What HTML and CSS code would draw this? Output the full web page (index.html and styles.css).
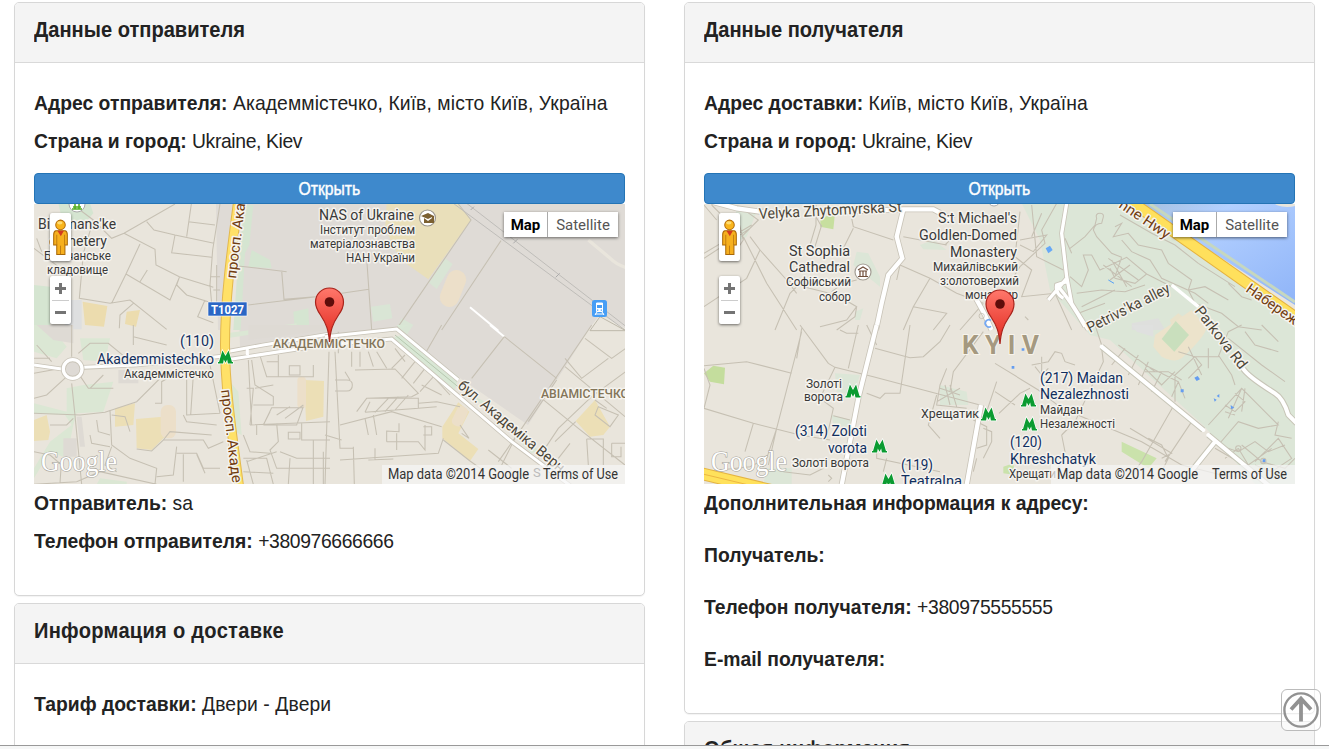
FILE: index.html
```html
<!DOCTYPE html>
<html lang="ru">
<head>
<meta charset="utf-8">
<title>Данные отправителя</title>
<link rel="stylesheet" href="styles.css">
</head>
<body>
<svg class="defs" width="0" height="0">
  <defs>
    <linearGradient id="pinFill" x1="0" y1="0" x2="0" y2="1"><stop offset="0" stop-color="#ff776b"/><stop offset="1" stop-color="#e0271c"/></linearGradient>
    <linearGradient id="water" x1="0" y1="0" x2="1" y2="1"><stop offset="0" stop-color="#a5bfdd"/><stop offset=".3" stop-color="#b3d0ff"/><stop offset="1" stop-color="#8fb4f8"/></linearGradient>
    <symbol id="pin" viewBox="0 0 30 56" overflow="visible">
      <path d="M15 55C14 43 12 37 6 28C2.500 23 1 20 1 15A14 14 0 0 1 29 15C29 20 27 24 24 28C18 37 16 43 15 55Z" fill="url(#pinFill)" stroke="#a8231b" stroke-width="1.200"/>
      <circle cx="15" cy="15" r="4.800" fill="#5e0d0a"/>
    </symbol>
    <symbol id="metro" viewBox="0 0 44 40" overflow="visible">
      <path d="M0 39H15L17 27L22 37L27 27L29 39H44V35H41L31 1L22 17L13 1L3 35H0Z" fill="#0b9b31" stroke="#fff" stroke-width="4" paint-order="stroke"/>
    </symbol>
    <symbol id="pegman" viewBox="0 0 44 108">
      <path d="M8 34H36Q42 36 42 46V76H35V104H11V76H2V46Q2 36 8 34Z" fill="#f6b01f" stroke="#a96808" stroke-width="3"/>
      <path d="M11 46V76M34 46V76M22 78V103" stroke="#b87510" stroke-width="2.500"/>
      <path d="M13 34H32L23 50Z" fill="#d23b20"/>
      <circle cx="22" cy="17" r="14" fill="#f9b51c" stroke="#b36c0b" stroke-width="3"/>
      <ellipse cx="20" cy="11" rx="8" ry="5" fill="#ffdc71"/>
    </symbol>
  </defs>
</svg>
<main class="page">
  <div class="column">
    <section class="panel">
      <h2 class="panel-head"><span class="fit">Данные отправителя</span></h2>
      <div class="panel-body">
        <p class="row"><span class="fit"><b>Адрес отправителя:</b> <span class="loose">Академмістечко, Київ, місто Київ, Україна</span></span></p>
        <p class="row"><span class="fit"><b>Страна и город:</b> <span class="tight">Ukraine, Kiev</span></span></p>
        <button class="open"><span>Открыть</span></button>
        <div class="map">
          <svg class="canvas" viewBox="34 204 591 280">
            <path d="M34 204H625V484H34Z" fill="#e9e5dc"/>
            <path d="M247 204H625V328L600 314L592 325L528 425L460 378L398 330L240 347L238 280ZM216 204H236L229 330H218Z" fill="#dfdbd6"/>
            <g transform="translate(30 170) scale(.33333)">
              <path d="M85 100H180L190 130L160 165H100ZM645 105H670L658 225L645 250L632 480H610L625 260ZM665 240L720 270L725 295L655 290ZM790 425L835 415L838 480H795ZM12 345L60 350V480H12Z" fill="#d5e5d1"/>
              <path d="M158 395L232 408L222 470L165 465ZM290 425L330 420L318 470L285 462Z" fill="#ecdcae"/>
              <path d="M100 390H155V478H105Z" fill="#dedfe0"/>
              <path d="M130 105L190 150L245 205L282 190L435 102M282 190L375 238L378 285L448 320L550 352M484 102L470 200M350 155L372 180L435 195L552 220M435 195L425 248L545 262M475 155L555 165M330 222L288 312L245 400M288 312L420 390L448 322L440 345L470 375L535 395M352 300L330 335M570 102L548 240L540 345L545 400M190 150L160 250L148 385L240 400L300 390L410 478M525 390L503 440L550 458M310 400L270 435L268 475M625 288L770 305M755 302L762 388L855 380M655 405L860 380M12 235L85 290M20 205L35 245M560 285V395M540 320H570M550 360H570" class="street"/>
            </g>
            <g transform="translate(325 170) scale(.33333)">
              <path d="M185 102H400L438 150L310 328L225 268L180 175Z" fill="#e9dfba"/>
              <path d="M360 265L383 282L335 357L312 338ZM138 410L195 402L202 445L145 455ZM230 445L265 465L245 495L215 475Z" fill="#d9e5d5"/>
              <rect x="355" y="298" width="58" height="115" rx="29" transform="rotate(22 384 355)" fill="#ecdfc9"/>
              <path d="M400 102L438 150L218 472M528 212L350 480M125 265L140 480M50 370L132 358" class="street"/>
              <path d="M385 100L900 480M425 100L900 467" fill="none" stroke="#bfbdb9" stroke-width="3"/>
              <path d="M437 120L447 110M565 220L577 208M692 322L704 310" stroke="#aaa" stroke-width="3"/>
              <path d="M790 210L850 260Q875 285 902 292" fill="none" stroke="#e9e5dc" stroke-width="10"/>
              <path d="M435 412L520 482" stroke="#fff" stroke-width="6"/>
              <path d="M795 482L825 440L902 482Z" fill="#e9e5dc" stroke="#bdb8aa" stroke-width="3"/>
            </g>
            <g transform="translate(30 325) scale(.33333)">
              <path d="M12 0H60L110 65L80 100L12 80ZM150 40H240L225 110L160 105ZM160 180L250 170L220 260L140 265L130 300L110 400L60 380L12 460V430L60 350L125 300L105 270L12 265V235L110 260V190ZM600 170L625 200L635 330L615 320ZM590 25L800 -5V8L590 40ZM210 460L290 470V478H200Z" fill="#dbe7d4"/>
              <path d="M20 0H130V55L70 45ZM655 0H895V15L655 45ZM265 135H325V175H265ZM100 340H140V395H100ZM140 275H155L165 365H150Z" fill="#dedad4"/>
              <path d="M255 250L315 235L310 300L255 305ZM318 282L400 275L410 330L365 375L320 370ZM823 165L882 168L880 275L828 288ZM12 285L50 270L60 320L55 345L12 348Z" fill="#ecdfb6"/>
              <rect x="392" y="240" width="46" height="100" rx="20" fill="#ecdfc9"/><rect x="802" y="155" width="26" height="95" rx="12" fill="#ecdfc9"/>
              <path d="M125 95V0M110 155L50 210L12 220M125 175L135 272L155 478M12 265L150 270L225 262L320 230L400 150L460 135M12 145L95 130M145 145L175 190H250M180 190L220 150M310 0V60M310 35L410 60M470 140V270L570 265M490 150L482 270M540 120L570 265M460 270L470 290L560 300M375 235H395V170L430 150M240 255L245 360L300 400L380 430L375 478M245 270L285 275L300 320M200 285L205 320L240 330M180 330L185 355L240 365M245 365L225 420L260 440M320 372L365 378L400 345H520L535 370L580 350M400 345L420 320L545 330M440 365L430 450L380 455M440 385H500L520 430H570M460 388V470M500 388L525 445M12 380L60 390L95 420M95 400L90 475M12 478L140 470L210 440L380 478M20 60L65 110M12 100H60M145 85L180 55H235L290 100M60 300H110L130 280" class="street"/>
              <path d="M655 105L665 300M650 190H670L660 300M665 105L675 180L730 215V240H670M675 190L730 180M690 92L710 155H850V120M745 90V155M710 110H745M778 122H810V150H778ZM700 300L725 248H820M720 260L700 300M740 270L780 245M765 280L820 240M700 300H800L820 245M660 300L900 290M740 295L745 350L720 375L740 430H900M750 380L800 400H900M775 322H810V342H775ZM815 295V345H900M640 330L660 380L720 385M640 400H710L730 478M640 440L730 445M780 400L775 478M650 405L670 478M850 345V480M880 380V478M740 380L650 410M680 300V330" class="street"/>
              <path d="M12 120L95 132M160 127L320 120L575 94M590 80L700 60L895 28M592 104L895 58" fill="none" stroke="#c8c3b7" stroke-width="14"/>
              <path d="M12 120L95 132M160 127L320 120L575 94M590 80L700 60L895 28M592 104L895 58M652 70V90" fill="none" stroke="#fff" stroke-width="9"/>
              <circle cx="128" cy="132" r="28" fill="#dedad5" stroke="#c8c3b7" stroke-width="15"/><circle cx="128" cy="132" r="28" fill="none" stroke="#fff" stroke-width="10"/>
            </g>
            <g transform="translate(325 325) scale(.33333)">
              <path d="M230 30L400 155L390 195L200 40ZM215 0H250L225 15ZM440 210L480 230L520 280L640 375L620 385Z" fill="#d9e7d5"/>
              <path d="M400 232L433 260L400 325L460 372L435 408L352 340V305ZM810 225L855 305L835 330L795 335L752 288Z" fill="#ecdfb6"/>
              <rect x="388" y="243" width="34" height="62" rx="14" transform="rotate(26 405 273)" fill="#ecdfc9"/>
              <path d="M495 0L538 35" stroke="#fff" stroke-width="6"/>
              <path d="M538 35L695 160M538 35L440 160M350 0L305 78M800 0L590 310L520 410M780 40L860 100L902 70M720 125L900 275M695 165L610 290M902 140L800 215L700 310L640 400M650 220L760 310L900 420M720 100L770 160L850 100M752 290L690 350M810 225L845 250M820 245L880 270L855 305L810 270ZM785 342H835V420M785 342L790 420M860 355H902M860 355V395H888V365M735 355L700 400M570 340L530 420M490 375L560 430M405 300L432 340L410 325M355 345L435 408L480 440" class="street"/>
              <path d="M80 80V125M105 80V125M130 80L145 125M155 80L185 130M210 70L240 110M240 90L200 130M270 110L230 160M300 130L265 175M330 150L285 200M90 135L210 132L280 205L260 215L125 220L95 260M125 220H280V250L120 262M120 262L135 230M150 262L190 220M180 260L220 215M210 255L250 210M280 235L335 230M280 250L335 245M335 230L405 245M30 165H65Q82 165 82 180Q82 198 65 198H30M60 140L75 165M12 80L0 480M30 80L45 370H85M0 330L50 345M45 405L340 385L355 340M85 365L88 478M45 300L200 260L350 305M120 280L130 330M145 270L155 330M185 350V318L222 320V295M215 325V350H280L300 375L300 300M295 305H320V330H295M185 350H215M215 345V375M130 405L205 402M150 405V370M290 180L350 210M320 150L375 210M40 20V85" class="street"/>
              <path d="M0 35L215 12L400 165M0 60L200 42L560 350L760 500" fill="none" stroke="#c8c3b7" stroke-width="14"/>
              <path d="M0 35L215 12L400 165M0 60L200 42L560 350L760 500" fill="none" stroke="#fff" stroke-width="9"/>
              <path d="M210 30L405 190" stroke="#b6c8af" stroke-width="3"/>
            </g>
            <path d="M238 202C231 255 225 300 225 345C225 390 233 440 239 486" fill="none" stroke="#e3b84d" stroke-width="10"/>
            <path d="M238 202C231 255 225 300 225 345C225 390 233 440 239 486" fill="none" stroke="#ffe168" stroke-width="8"/>
            <circle cx="77" cy="204" r="8" fill="#fff" stroke="#aaa"/><path d="M73 203H81M73 207H81M75 202V209M79 202V209M72 209H82" stroke="#51ad20" stroke-width="1.500"/>
            <g class="label big"><text x="38" y="229" textLength="78" lengthAdjust="spacingAndGlyphs">Bikhmans'ke</text><text x="49" y="246" textLength="58" lengthAdjust="spacingAndGlyphs">cemetery</text>
              <text x="319" y="220" textLength="95" lengthAdjust="spacingAndGlyphs">NAS of Ukraine</text></g>
            <g class="label small"><text x="44" y="260" textLength="67" lengthAdjust="spacingAndGlyphs">Більчанське</text><text x="47" y="274" textLength="61" lengthAdjust="spacingAndGlyphs">кладовище</text>
              <text x="320" y="234" textLength="95" lengthAdjust="spacingAndGlyphs">Інститут проблем</text><text x="310" y="248" textLength="105" lengthAdjust="spacingAndGlyphs">матеріалознавства</text><text x="346" y="262" textLength="69" lengthAdjust="spacingAndGlyphs">НАН України</text><text x="124" y="378" textLength="90" lengthAdjust="spacingAndGlyphs">Академмістечко</text></g>
            <g class="label metro"><text x="180" y="346" textLength="34" lengthAdjust="spacingAndGlyphs">(110)</text><text x="97" y="364" textLength="117" lengthAdjust="spacingAndGlyphs">Akademmistechko</text></g>
            <g class="label district"><text x="273" y="348" textLength="112" lengthAdjust="spacingAndGlyphs">АКАДЕММІСТЕЧКО</text><text x="541" y="398" textLength="88" lengthAdjust="spacingAndGlyphs">АВІАМІСТЕЧКО</text></g>
            <g class="label highway"><text transform="translate(236 279) rotate(-83)" textLength="76" lengthAdjust="spacingAndGlyphs">просп. Ака</text><text transform="translate(221 390) rotate(83)" textLength="94" lengthAdjust="spacingAndGlyphs">просп. Акаде</text></g>
            <g class="label roadname"><text transform="translate(457 387) rotate(40)" textLength="134" lengthAdjust="spacingAndGlyphs">бул. Академіка Верн</text></g>
            <path d="M208 302H247V316H208Z" fill="#2a66c5" stroke="#fff" stroke-width=".6"/><text x="211" y="314" class="shield" textLength="33" lengthAdjust="spacingAndGlyphs">T1027</text>
            <circle cx="427.500" cy="218" r="8" fill="#fff" stroke="#9b968c" stroke-width="1.200"/><path d="M421 216L428 213L434 216L428 219ZM424 218L428 221L432 218V223H424ZM432 216H434V223H432Z" fill="#7c6132"/>
            <rect x="592" y="300" width="15" height="17" rx="2.500" fill="#479ef5"/><path d="M596.500 303H602.500V311.500H596.500ZM595 314H604M597 312L595 315M602 312L604 315" fill="#fff" stroke="#fff"/><path d="M597 305H602V308H597ZM597 309.500H598.300V310.800H597ZM600.700 309.500H602V310.800H600.700Z" fill="#479ef5"/>
            <use href="#metro" x="218" y="350" width="15" height="14"/>
            <use href="#pin" x="314.500" y="287" width="30" height="56"/>
            <text class="google" x="41" y="471" textLength="76" lengthAdjust="spacingAndGlyphs">Google</text>
            <path d="M382 465H625V484H382Z" fill="#f5f5f5" fill-opacity=".72"/>
            <text x="533" y="477" class="faded">S</text>
            <g class="credit"><text x="388" y="479" textLength="141" lengthAdjust="spacingAndGlyphs">Map data ©2014 Google</text><text x="543" y="479" textLength="75" lengthAdjust="spacingAndGlyphs">Terms of Use</text></g>
          </svg>
          <div class="tools"><div class="peg"><svg viewBox="0 0 44 108"><use href="#pegman"/></svg></div><div class="zoom"><i class="plus"></i><hr><i class="minus"></i></div></div>
          <div class="types"><b>Map</b><span>Satellite</span></div>
        </div>
        <p class="row"><span class="fit"><b>Отправитель:</b> sa</span></p>
        <p class="row"><span class="fit"><b>Телефон отправителя:</b> <span class="tight">+380976666666</span></span></p>
      </div>
    </section>
    <section class="panel">
      <h2 class="panel-head"><span class="fit wide">Информация о доставке</span></h2>
      <div class="panel-body"><p class="row"><span class="fit"><b>Тариф доставки:</b> <span class="loose">Двери - Двери</span></span></p></div>
    </section>
  </div>
  <div class="column">
    <section class="panel">
      <h2 class="panel-head"><span class="fit">Данные получателя</span></h2>
      <div class="panel-body spaced">
        <p class="row"><span class="fit"><b>Адрес доставки:</b> <span class="loose">Київ, місто Київ, Україна</span></span></p>
        <p class="row"><span class="fit"><b>Страна и город:</b> <span class="tight">Ukraine, Kiev</span></span></p>
        <button class="open"><span>Открыть</span></button>
        <div class="map recipient">
          <svg class="canvas" viewBox="704 204 591 280">
            <path d="M704 204H1295V484H704Z" fill="#e9e5dc"/>
            <path d="M1022 204H1135L1295 320V484H1255L1204 426L1110 340L1090 335L1050 290L1040 240Z" fill="#dce6d7"/>
            <path d="M1137 204H1295V305Z" fill="url(#water)"/>
            <path d="M1274 202A13 5 0 0 0 1300 202Z" fill="#e9e5dc"/>
            <path d="M1150 204L1295 302" stroke="#c6d7bf" stroke-width="3"/>
            <g transform="translate(700 170) scale(.33333)">
              <path d="M362 145L405 130L400 178L360 170Z" fill="#c7df9f"/>
              <path d="M470 245L505 250L540 320V350L460 285ZM465 425L490 415L480 450H465ZM660 225L700 210L740 240L670 238ZM110 105L170 125L140 200L100 220Z" fill="#dce6d7"/>
              <path d="M12 105L50 150M35 105L75 145M12 250L155 165M12 265L150 175M115 150L130 210L110 240M140 125L175 150L125 200M365 165L345 230M348 105V165L330 225M345 135L365 170M455 145L460 170L580 210M460 175L430 235L415 260M150 200L180 240L140 325L12 410M130 200L200 340L290 480M180 240L260 330L290 370M300 340L270 370L225 480M260 330L310 350L410 375L470 410L440 450L360 470M470 410L465 440L410 480M395 365L430 340L470 330M600 285L690 325L770 370L850 400M690 325L640 410L610 480M610 200L740 225M735 225L760 200M600 285L590 330M640 410L740 430L700 480M850 400L780 480" class="street"/>
              <path d="M35 95L110 115L180 125L300 130M430 125L610 118H700L760 150M610 118L590 200L607 265L565 315L545 400L528 480M825 380L855 435L875 480" fill="none" stroke="#c9c4b8" stroke-width="18"/>
              <path d="M35 95L110 115L180 125L300 130M430 125L610 118H700L760 150M610 118L590 200L607 265L565 315L545 400L528 480M825 380L855 435L875 480" fill="none" stroke="#fff" stroke-width="13"/>
              <circle cx="845" cy="438" r="8" fill="none" stroke="#bbb5a7" stroke-width="2"/><path d="M873 451A11 11 0 1 0 873 469" fill="none" stroke="#74a8f3" stroke-width="5"/>
            </g>
            <g transform="translate(995 170) scale(.33333)">
              <path d="M75 125L60 260L110 300L80 380L180 370L230 480M110 105L125 260L205 300M75 210L155 195L115 245L75 225M140 130L110 200M185 100L140 180L150 220L75 290L40 345M225 235L270 200L300 165L305 145Q300 130 315 130Q330 130 323 148L320 160Q300 160 295 180L305 200L350 250L380 262M225 320L260 350L280 300L265 255L290 255L315 300L395 262L455 312L420 340L360 325L345 295M340 265L430 330M325 285L410 350M350 270L395 350M380 262L360 320M405 285L345 330M455 312L530 350M360 170L380 160L355 200L400 190L430 225L500 240L520 280L590 330L580 360L630 350L700 390M375 135L470 190L540 225L610 280L720 350M380 210L410 245L465 270L500 325L600 370L640 400M245 370L320 360L390 365L450 345M260 410L360 360M250 430L330 400M230 250L210 205M580 360L600 400L680 430L730 470L800 480M700 340L740 380L770 390M90 440L100 450" class="street"/>
              <path d="M152 235L165 227L173 240L160 250Z" fill="#66a8f7"/><path d="M340 330L357 340" stroke="#55a0f5" stroke-width="3"/>
              <path d="M535 480L525 450L550 430L590 460L600 480Z" fill="#e9e2ca"/><path d="M410 460L490 445L510 480H410Z" fill="#dedfdd"/>
              <path d="M215 100L200 190L215 320L230 400L280 480M160 390L215 325M190 350Q225 390 270 470M215 335L185 345Q180 370 205 385" fill="none" stroke="#c9c4b8" stroke-width="15"/>
              <path d="M215 100L200 190L215 320L230 400L280 480M160 390L215 325M190 350Q225 390 270 470M215 335L185 345Q180 370 205 385M530 345L610 410" fill="none" stroke="#fff" stroke-width="10"/>
              <path d="M380 75L920 455" stroke="#e5b23e" stroke-width="35"/><path d="M380 75L920 455" stroke="#ffe05c" stroke-width="29"/>
            </g>
            <g transform="translate(700 325) scale(.33333)">
              <path d="M12 145L40 122L75 128L72 178L30 170Z" fill="#c4dd9d"/>
              <path d="M405 145L480 150L460 210L410 200ZM720 180L800 200L805 240L720 240ZM395 270L455 285V310L400 300ZM200 430H275V478H190Z" fill="#dce6d7"/>
              <path d="M12 122L140 110L275 145M300 0L385 115L405 127L520 155L840 240M475 0L445 130M420 15L440 25H475M525 70L630 98L670 95L720 50L750 0M630 0L600 205H555L540 220L500 205M305 20L230 310L200 400M305 10L290 100M12 130L30 180L12 250M12 250L160 295L300 330L390 345M160 295L135 380M230 310L205 420M405 127L360 220L400 250L380 340M400 272L450 285M530 350V400L720 440M710 210L685 300L720 340M740 130L720 180L710 240L800 250M720 190L780 210M735 180L750 240M750 180L770 245M710 230L780 190M820 285L860 305V360L830 370M850 310L875 320V350L850 400M830 400L820 440M560 400L550 440M385 450L395 460L385 470M750 200L760 140L850 20M890 170L860 260L870 270M530 60L500 0M250 440L330 450L370 430M12 440L150 425L200 400" class="street"/>
              <path d="M530 0L475 220L425 480M843 240L800 480" fill="none" stroke="#c9c4b8" stroke-width="18"/><path d="M530 0L475 220L425 480M843 240L800 480" fill="none" stroke="#fff" stroke-width="13"/>
              <path d="M0 368L230 430" stroke="none"/>
              <path d="M-10 370L210 490" stroke="none"/>
              <path d="M0 378L0 480H170L150 470L12 430Z" fill="none"/>
              <path d="M0 445L230 500" stroke="#e4b443" stroke-width="38"/><path d="M0 445L230 500" stroke="#ffe15b" stroke-width="32"/><path d="M0 445L230 500" stroke="#ecb641" stroke-width="3"/>
            </g>
            <g transform="translate(995 325) scale(.33333)">
              <path d="M380 350L485 400L460 430L420 405L380 380ZM25 425L55 415L60 450L25 445Z" fill="#cae2ab"/>
              <path d="M480 30L590 -45L635 5Q635 30 560 100Q540 115 500 95L475 65Z" fill="#ece3cb"/><path d="M542 -12L582 30L538 80L500 42Z" fill="#c9dfbd"/><path d="M410 0H475V35L425 20Z" fill="#dfe0df"/>
              <path d="M0 115L130 195L200 250L440 350L560 420L700 455M12 265L75 205L105 190M0 200L60 240M320 60L300 0M320 70L325 110L240 290L200 330M200 330L210 380L180 450M540 235L440 410L410 450M460 340L500 360L520 400L490 460M590 290L510 410M405 310L530 385L500 400M110 120L160 110L180 80L200 85L210 110L240 120M120 125L140 150L160 130M140 95V150M370 60L480 140M390 70L350 120M430 90L400 150M460 110L430 180M500 140L470 200M540 140L500 180L450 130M550 80L600 95H670L700 20L740 0M600 95L540 150L540 230M600 95L620 120L580 160M640 70V130M670 90L710 150L720 180M580 65L620 150M450 120L550 170L530 215M450 140L520 140L560 165M640 300L740 190L800 250L850 300L790 310L730 290L670 360M740 190L700 280M720 205L750 230L720 260L690 240M750 190L740 260M690 260L720 270M670 360L730 380L780 350L820 380L870 360M730 370L760 420L830 370M780 410L850 340L890 400L830 440L780 420M800 410L740 360M800 410L870 430L900 400M660 370L730 410M690 400L730 370M850 290L840 330L890 340M700 40L800 120L870 170M750 20L780 60L850 80M800 0L850 50M550 170L570 220" class="street"/>
              <circle cx="730" cy="370" r="8" class="street"/><circle cx="805" cy="408" r="8" class="street"/>
              <path d="M598 158L608 153L615 163L605 168ZM665 213L673 207V218ZM707 240L718 248L708 253ZM656 220L665 224L659 230ZM557 193H566V202H557ZM803 403H811V411H803ZM50 123H58V131H50ZM80 70H88V77H80Z" fill="#659df0"/>
              <path d="M320 65L625 315M640 330L820 480M745 132Q760 155 840 205Q865 220 880 270L905 295M660 350L580 450" fill="none" stroke="#c7c5b7" stroke-width="18"/>
              <path d="M320 65L625 315M640 330L820 480M745 132Q760 155 840 205Q865 220 880 270L905 295M660 350L580 450" fill="none" stroke="#fff" stroke-width="12" stroke-linecap="round"/>
            </g>
            <circle cx="994" cy="200" r="6" fill="#fff" stroke="#aaa"/>
            <g class="label roadname"><text transform="translate(759 219) rotate(-3)" textLength="143" lengthAdjust="spacingAndGlyphs">Velyka Zhytomyrska St</text><text transform="translate(1090 333) rotate(-27)" textLength="91" lengthAdjust="spacingAndGlyphs">Petrivs'ka alley</text><text transform="translate(1194 311) rotate(52)" textLength="75" lengthAdjust="spacingAndGlyphs">Parkova Rd</text></g>
            <g class="label highway"><text transform="translate(1118 207) rotate(34)" textLength="58" lengthAdjust="spacingAndGlyphs">nne Hwy</text><text transform="translate(1245 291) rotate(35)" textLength="68" lengthAdjust="spacingAndGlyphs">Набережн</text></g>
            <g class="label big"><text x="789" y="256" textLength="61" lengthAdjust="spacingAndGlyphs">St Sophia</text><text x="789" y="272" textLength="61" lengthAdjust="spacingAndGlyphs">Cathedral</text><text x="938" y="223" textLength="79" lengthAdjust="spacingAndGlyphs">S:t Michael's</text><text x="919" y="240" textLength="98" lengthAdjust="spacingAndGlyphs">Goldlen-Domed</text><text x="950" y="257" textLength="67" lengthAdjust="spacingAndGlyphs">Monastery</text></g>
            <g class="label small"><text x="786" y="286" textLength="65" lengthAdjust="spacingAndGlyphs">Софійський</text><text x="819" y="301" textLength="32" lengthAdjust="spacingAndGlyphs">собор</text><text x="933" y="271" textLength="85" lengthAdjust="spacingAndGlyphs">Михайлівський</text><text x="940" y="285" textLength="79" lengthAdjust="spacingAndGlyphs">з:олотоверхий</text><text x="965" y="299" textLength="53" lengthAdjust="spacingAndGlyphs">монастир</text><text x="806" y="388" textLength="36" lengthAdjust="spacingAndGlyphs">Золоті</text><text x="804" y="401" textLength="39" lengthAdjust="spacingAndGlyphs">ворота</text><text x="921" y="418" textLength="58" lengthAdjust="spacingAndGlyphs">Хрещатик</text><text x="792" y="467" textLength="77" lengthAdjust="spacingAndGlyphs">Золоті ворота</text><text x="1040" y="414" textLength="43" lengthAdjust="spacingAndGlyphs">Майдан</text><text x="1040" y="428" textLength="75" lengthAdjust="spacingAndGlyphs">Незалежності</text><text x="1009" y="478" textLength="47" lengthAdjust="spacingAndGlyphs">Хрещати</text></g>
            <g class="label metro"><text x="795" y="436" textLength="72" lengthAdjust="spacingAndGlyphs">(314) Zoloti</text><text x="828" y="453" textLength="39" lengthAdjust="spacingAndGlyphs">vorota</text><text x="901" y="470" textLength="32" lengthAdjust="spacingAndGlyphs">(119)</text><text x="901" y="486" textLength="61" lengthAdjust="spacingAndGlyphs">Teatralna</text><text x="1040" y="383" textLength="83" lengthAdjust="spacingAndGlyphs">(217) Maidan</text><text x="1040" y="399" textLength="89" lengthAdjust="spacingAndGlyphs">Nezalezhnosti</text><text x="1010" y="447" textLength="32" lengthAdjust="spacingAndGlyphs">(120)</text><text x="1010" y="464" textLength="86" lengthAdjust="spacingAndGlyphs">Khreshchatyk</text></g>
            <text class="city" x="962" y="354" textLength="77">KYIV</text>
            <circle cx="863" cy="272" r="8" fill="#fff" stroke="#a39d94" stroke-width="1.200"/><path d="M858 270L863 267L868 270M859 271H867M860 271V276M863 271V276M866 271V276M858 276.500H868" fill="none" stroke="#704f3c" stroke-width="1.200"/>
            <use href="#metro" x="845.500" y="384" width="15" height="14"/><use href="#metro" x="981" y="407" width="15" height="14"/><use href="#metro" x="872" y="439" width="15" height="14"/><use href="#metro" x="881" y="473" width="15" height="14"/><use href="#metro" x="1021" y="393" width="15" height="14"/><use href="#metro" x="1022" y="417" width="15" height="14"/>
            <use href="#pin" x="985" y="289" width="30" height="56"/>
            <text class="google" x="711" y="471" textLength="76" lengthAdjust="spacingAndGlyphs">Google</text>
            <path d="M1051 465H1295V484H1051Z" fill="#f5f5f5" fill-opacity=".72"/>
            <g class="credit"><text x="1057" y="479" textLength="141" lengthAdjust="spacingAndGlyphs">Map data ©2014 Google</text><text x="1212" y="479" textLength="75" lengthAdjust="spacingAndGlyphs">Terms of Use</text></g>
          </svg>
          <div class="tools"><div class="peg"><svg viewBox="0 0 44 108"><use href="#pegman"/></svg></div><div class="zoom"><i class="plus"></i><hr><i class="minus"></i></div></div>
          <div class="types"><b>Map</b><span>Satellite</span></div>
        </div>
        <p class="row"><span class="fit"><b>Дополнительная информация к адресу:</b></span></p>
        <p class="row"><span class="fit"><b>Получатель:</b></span></p>
        <p class="row"><span class="fit"><b>Телефон получателя:</b> <span class="tight">+380975555555</span></span></p>
        <p class="row"><span class="fit"><b>E-mail получателя:</b></span></p>
      </div>
    </section>
    <section class="panel">
      <h2 class="panel-head"><span class="fit wide">Общая информация</span></h2>
      <div class="panel-body"></div>
    </section>
  </div>
</main>
<footer class="bottom"></footer>
<a class="to-top"><svg viewBox="0 0 40 42"><circle cx="20" cy="21" r="17.500" fill="none" stroke="#929292" stroke-width="2.500"/><path d="M20 33V10M9.500 20.500L20 9L30.500 20.500" fill="none" stroke="#929292" stroke-width="4"/></svg></a>
</body>
</html>
```

FILE: styles.css
```css
* { box-sizing: border-box; }
body { margin: 0; width: 1329px; height: 749px; overflow: hidden; background: #fff; color: #222; font: 21px/36px "Liberation Sans", Arial, sans-serif; }
.defs { position: absolute; }
.page { display: flex; gap: 39px; align-items: flex-start; height: 745px; overflow: hidden; padding: 2px 14px 0; }
.column { width: 631px; flex: none; display: flex; flex-direction: column; gap: 7px; }
.panel { border: 1px solid #d7d7d7; border-radius: 5px; background: #fff; overflow: hidden; box-shadow: 0 1px 1px rgba(0,0,0,.05); }
.panel-head { margin: 0; height: 60px; padding: 8px 19px 0; background: #f4f4f4; border-bottom: 1px solid #d9d9d9; font-size: 22px; line-height: 37px; }
.panel-body { padding: 22px 19px 34px; }
.row { margin: 0; height: 38px; white-space: nowrap; }
.fit { display: inline-block; transform: scaleX(.92); transform-origin: left center; white-space: nowrap; }
.wide { letter-spacing: .3px; }
.loose { letter-spacing: .1px; }
.tight { letter-spacing: -.4px; }
.panel-head .fit { transform: scaleX(.913); }
.spaced .map ~ .row + .row { margin-top: 14px; }
.open { display: block; width: 591px; height: 31px; margin: 12px 0 0; padding: 0; border: 1px solid #2474b5; border-radius: 4px; background: #3e89cc; color: #fff; font: 17.5px/28px "Liberation Sans", Arial, sans-serif; text-align: center; -webkit-text-stroke: .4px #fff; }
.open span { display: inline-block; transform: scaleX(.9); }
.map { position: relative; width: 591px; height: 280px; margin-bottom: 1px; }
.canvas { display: block; width: 591px; height: 280px; font-family: Roboto, sans-serif; overflow: hidden; }
.street { fill: none; stroke: #c6c0b3; stroke-width: 3.2; }
.label { paint-order: stroke; stroke: #f5f3ee; stroke-width: 3px; stroke-linejoin: round; fill: #393939; }
.big { font-size: 15px; }
.small { font-size: 13px; }
.metro { font-size: 15px; fill: #112f5f; }
.district { font-size: 12.5px; fill: #837559; font-weight: 500; }
.highway { font-size: 14.5px; fill: #713c10; }
.roadname { font-size: 15px; fill: #4c4638; }
.shield { font-size: 12px; font-weight: 700; fill: #fff; }
.google { font: 30px "Liberation Serif", serif; fill: #fff; stroke: #a5a39b; stroke-width: 1.2px; paint-order: stroke; }
.credit { font-size: 14px; fill: #333; }
.faded { font-size: 13px; fill: #bbb; }
.city { font-size: 26px; font-weight: 700; fill: #a59980; stroke: #f7f3ea; stroke-width: 2px; paint-order: stroke; }
.tools { position: absolute; left: 16px; top: 9px; display: flex; flex-direction: column; gap: 15px; }
.recipient .tools { left: 14.5px; }
.peg, .zoom { width: 21px; height: 48px; background: #fff; border-radius: 2px; box-shadow: 0 1px 3px rgba(0,0,0,.55); display: flex; flex-direction: column; align-items: center; justify-content: center; }
.peg svg { width: 15px; height: 37px; }
.zoom { gap: 6px; }
.zoom hr { width: 17px; border: 0; border-top: 1px solid #ccc; margin: 0; }
.plus, .minus { width: 11px; height: 11px; background: linear-gradient(#747474,#747474) center/11px 3px no-repeat; }
.plus { background: linear-gradient(#747474,#747474) center/11px 3px no-repeat, linear-gradient(#747474,#747474) center/3px 11px no-repeat; }
.types { position: absolute; top: 8px; right: 7px; width: 114px; height: 25px; background: #fff; display: flex; font: 15px/26px Roboto, sans-serif; color: #555; box-shadow: 0 1px 3px rgba(0,0,0,.55); }
.recipient .types { right: 8px; }
.types b { width: 44px; text-align: center; color: #000; border-right: 1px solid #aaa; }
.types span { flex: 1; text-align: center; white-space: nowrap; }
.bottom { height: 4px; border-top: 1px solid #999; background: #f6f7f7; }
.to-top { position: absolute; left: 1281px; top: 689px; width: 40px; height: 42px; border: 1px solid #bbb; border-radius: 6px; background: rgba(255,255,255,.55); }
.to-top svg { display: block; width: 38px; height: 40px; }
```
